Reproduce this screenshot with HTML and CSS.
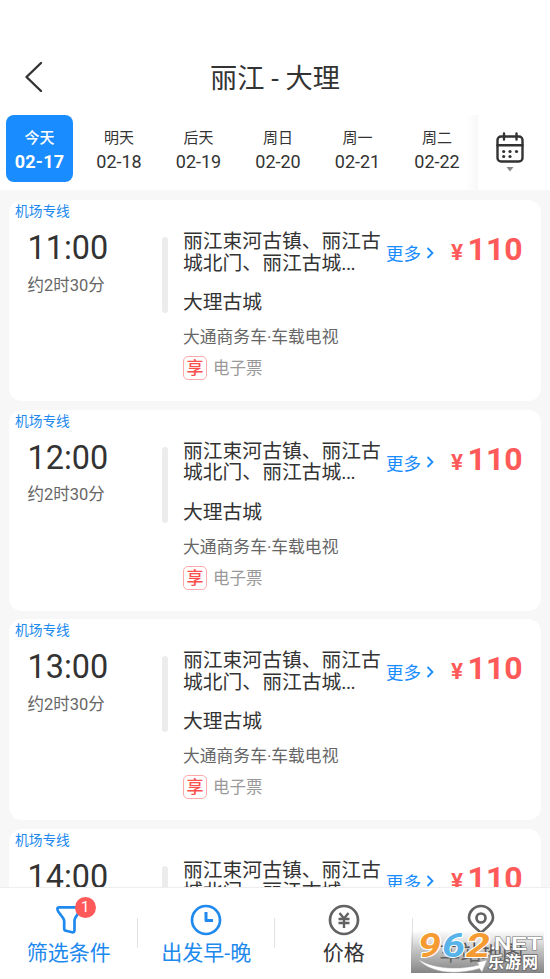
FILE: index.html
```html
<!DOCTYPE html>
<html lang="zh-CN">
<head>
<meta charset="utf-8">
<title>丽江 - 大理</title>
<link rel="stylesheet" href="styles.css">
</head>
<body>
<div class="app">
  <header class="header">
    <svg class="back" width="20" height="32" viewBox="0 0 20 32"><path d="M17 2 2.5 16 17 30"/></svg>
    <h1>丽江 - 大理</h1>
  </header>
  <nav class="dates">
    <div class="days">
      <div class="day active"><span>今天</span><b>02-17</b></div>
      <div class="day"><span>明天</span><b>02-18</b></div>
      <div class="day"><span>后天</span><b>02-19</b></div>
      <div class="day"><span>周日</span><b>02-20</b></div>
      <div class="day"><span>周一</span><b>02-21</b></div>
      <div class="day"><span>周二</span><b>02-22</b></div>
    </div>
    <div class="calendar">
      <svg width="30" height="41" viewBox="0 0 30 41">
        <rect class="line" x="2.5" y="4.5" width="25" height="25" rx="3.5"/>
        <path class="line" d="M2.5 13.3h25M9 1.500v6M21.500 1.500v6"/>
        <g class="dots"><circle cx="8.700" cy="19.500" r="1.600"/><circle cx="15" cy="19.500" r="1.600"/><circle cx="21.500" cy="19.500" r="1.600"/><circle cx="8.700" cy="24.500" r="1.600"/><circle cx="15" cy="24.500" r="1.600"/></g>
        <path class="arrow" d="M11.500 35h7L15 39.500z"/>
      </svg>
    </div>
  </nav>
  <main class="list">
    <article class="card">
      <div class="tag">机场专线</div>
      <div class="trip">
        <div class="when"><div class="time">11:00</div><div class="duration">约2时30分</div></div>
        <div class="bar"></div>
        <div class="route"><div class="from">丽江束河古镇、丽江古<br>城北门、丽江古城<span class="dots-end">...</span></div><div class="to">大理古城</div><div class="vehicle">大通商务车·车载电视</div><div class="ticket"><i>享</i><span>电子票</span></div></div>
        <div class="more">更多<svg width="8" height="14" viewBox="0 0 8 14"><path d="M1.500 2 6.500 7l-5 5"/></svg></div>
        <div class="price"><small>¥</small>110</div>
      </div>
    </article>
    <article class="card">
      <div class="tag">机场专线</div>
      <div class="trip">
        <div class="when"><div class="time">12:00</div><div class="duration">约2时30分</div></div>
        <div class="bar"></div>
        <div class="route"><div class="from">丽江束河古镇、丽江古<br>城北门、丽江古城<span class="dots-end">...</span></div><div class="to">大理古城</div><div class="vehicle">大通商务车·车载电视</div><div class="ticket"><i>享</i><span>电子票</span></div></div>
        <div class="more">更多<svg width="8" height="14" viewBox="0 0 8 14"><path d="M1.500 2 6.500 7l-5 5"/></svg></div>
        <div class="price"><small>¥</small>110</div>
      </div>
    </article>
    <article class="card">
      <div class="tag">机场专线</div>
      <div class="trip">
        <div class="when"><div class="time">13:00</div><div class="duration">约2时30分</div></div>
        <div class="bar"></div>
        <div class="route"><div class="from">丽江束河古镇、丽江古<br>城北门、丽江古城<span class="dots-end">...</span></div><div class="to">大理古城</div><div class="vehicle">大通商务车·车载电视</div><div class="ticket"><i>享</i><span>电子票</span></div></div>
        <div class="more">更多<svg width="8" height="14" viewBox="0 0 8 14"><path d="M1.500 2 6.500 7l-5 5"/></svg></div>
        <div class="price"><small>¥</small>110</div>
      </div>
    </article>
    <article class="card">
      <div class="tag">机场专线</div>
      <div class="trip">
        <div class="when"><div class="time">14:00</div><div class="duration">约2时30分</div></div>
        <div class="bar"></div>
        <div class="route"><div class="from">丽江束河古镇、丽江古<br>城北门、丽江古城<span class="dots-end">...</span></div><div class="to">大理古城</div><div class="vehicle">大通商务车·车载电视</div><div class="ticket"><i>享</i><span>电子票</span></div></div>
        <div class="more">更多<svg width="8" height="14" viewBox="0 0 8 14"><path d="M1.500 2 6.500 7l-5 5"/></svg></div>
        <div class="price"><small>¥</small>110</div>
      </div>
    </article>
  </main>
  <footer class="filters">
    <div class="filter on">
      <div class="icon">
        <svg width="32" height="32" viewBox="0 0 32 32"><path d="M6 3.300H26.500Q28.300 3.300 27.300 6L22.500 13.500Q21.500 15 21.500 17V26Q21.500 28.700 19 28.200L13 26.800Q11.200 26.400 11.200 24.500V17.500Q11.200 15.800 10.200 14.200L5.200 7.500Q3.200 3.300 6 3.300Z"/></svg>
        <span class="badge">1</span>
      </div>
      <span>筛选条件</span>
    </div>
    <div class="filter on">
      <div class="icon"><svg width="32" height="32" viewBox="0 0 32 32"><circle cx="16" cy="16" r="14"/><path class="hand" d="M16 8v8.500h7"/></svg></div>
      <span>出发早-晚</span>
    </div>
    <div class="filter">
      <div class="icon"><svg width="32" height="32" viewBox="0 0 32 32"><circle cx="16" cy="16" r="14"/><path class="yen" d="m11.500 9 4.500 5.500L20.500 9M10.500 15h11M10.500 19h11M16 14.500V24"/></svg></div>
      <span>价格</span>
    </div>
    <div class="filter">
      <div class="icon"><svg width="32" height="32" viewBox="0 0 32 32"><path d="M16 29C13 25 4 20.500 4 14a12 12 0 0 1 24 0C28 20.500 19 25 16 29Z"/><circle cx="16" cy="14" r="4.500"/></svg></div>
      <span>车站地图</span>
    </div>
    <div class="mark">
      <svg width="133" height="43" viewBox="0 0 133 43">
        <defs><linearGradient id="shade" x2="0" y2="1"><stop offset="0" stop-color="#888" stop-opacity="0"/><stop offset=".5" stop-color="#808080" stop-opacity=".5"/><stop offset="1" stop-color="#777" stop-opacity=".9"/></linearGradient></defs>
        <rect width="133" height="43" fill="url(#shade)"/>
        <path class="swoosh" d="M7 29C20 38 45 41 68 35L66 32.500 76 30 71 42 68.500 38.500C42 46 18 42 7 29Z"/>
        <g class="digits"><text x="7" y="26.500" textLength="23" lengthAdjust="spacingAndGlyphs" fill="#f59b32">9</text><text x="31" y="26.500" textLength="23" lengthAdjust="spacingAndGlyphs" fill="#58b3e8">6</text><text x="55" y="26.500" textLength="24" lengthAdjust="spacingAndGlyphs" fill="#f59b32">2</text></g>
        <circle cx="82" cy="18" r="1.500" fill="#fff"/>
        <text class="net" x="83" y="20" textLength="48" lengthAdjust="spacingAndGlyphs">NET</text>
        <text class="site" x="77" y="38" textLength="50">乐游网</text>
      </svg>
    </div>
  </footer>
</div>
</body>
</html>
```

FILE: styles.css
```css
* { box-sizing: border-box; }
body { margin: 0; background: #fff; color: #333; font-family: Roboto, "Noto Sans CJK SC", sans-serif; }
svg { display: block; fill: none; }
.app { width: 550px; height: 979px; display: flex; flex-direction: column; overflow: hidden; }
.header { height: 115px; padding: 61px 24px 0; display: grid; grid-template-columns: 20px 1fr 20px; flex: none; }
.header h1 { margin: 1px 0 0; text-align: center; font-size: 27.2px; line-height: 34px; font-weight: 400; }
.back { stroke: #333; stroke-width: 2.4; stroke-linecap: round; stroke-linejoin: round; }
.dates { height: 75px; display: flex; flex: none; }
.days { width: 478px; display: flex; gap: 12.5px; padding-left: 6px; background: linear-gradient(90deg, #fff 466px, #f8f8f8); }
.day { width: 67px; height: 67px; flex: none; display: flex; flex-direction: column; align-items: center; padding-top: 12px; border-radius: 8px; }
.day span { font-size: 15px; line-height: 22px; }
.day b { font-size: 18px; line-height: 25px; font-weight: 400; }
.day.active { color: #fff; background: #198cff; }
.day.active span { font-weight: 500; }
.day.active b { font-weight: 700; letter-spacing: .2px; }
.calendar { flex: 1; padding: 17px 0 0 17px; background: #fff; }
.calendar .line { stroke: #333; stroke-width: 2.4; stroke-linecap: round; }
.dots { fill: #333; }
.arrow { fill: #888; }
.list { flex: 1; min-height: 0; overflow: hidden; background: #f7f7f7; padding: 10px 9px 0; display: flex; flex-direction: column; gap: 8.5px; }
.card { flex: none; height: 201px; border-radius: 13px; background: #fff; }
.tag { height: 26px; padding: 1px 0 0 6px; color: #2089ee; font-size: 13.7px; line-height: 20px; }
.trip { display: flex; align-items: flex-start; }
.when { width: 153px; padding-left: 18.5px; }
.time { font-size: 32.4px; line-height: 40px; margin-top: 2px; }
.duration { color: #666; font-size: 16.5px; line-height: 22px; margin-top: 6.500px; }
.bar { width: 6px; height: 76px; margin: 11px 15px 0 0; border-radius: 3px; background: #ececec; }
.route { width: 203px; white-space: nowrap; }
.from { font-size: 19.8px; line-height: 21.500px; margin-top: 5px; }
.dots-end { letter-spacing: -.6px; }
.to { font-size: 19.8px; line-height: 28px; margin-top: 15px; }
.vehicle { color: #666; font-size: 16.8px; line-height: 24px; margin-top: 8px; }
.ticket { display: flex; align-items: center; gap: 6px; margin-top: 6px; color: #999; font-size: 16.5px; line-height: 24px; }
.ticket span { padding-top: 2px; }
.ticket i { width: 24px; height: 24px; border: 1.5px solid #ffaaaa; border-radius: 5px; color: #f9504e; text-align: center; font-size: 17px; font-weight: 500; line-height: 23px; font-style: normal; }
.more { display: flex; align-items: center; gap: 5px; height: 24px; margin-top: 14.500px; color: #198cff; font-size: 17.5px; width: 65px; }
.more svg { stroke: #198cff; stroke-width: 1.8; }
.price { color: #ff5a5a; font-size: 32px; line-height: 38px; font-weight: 700; white-space: nowrap; margin-top: 4px; }
.price small { font-size: 22.500px; margin-right: 4.500px; }
.filters { height: 92px; flex: none; position: relative; display: flex; border-top: 1px solid #eee; }
.filter { width: 137.5px; display: flex; flex-direction: column; align-items: center; padding-top: 16px; font-size: 21px; line-height: 35px; }
.filter:nth-child(-n+3) { background: linear-gradient(#e2e2e2, #e2e2e2) right 30px / 1px 30px no-repeat; }
.filter.on { color: #2089ee; }
.icon { position: relative; height: 32px; }
.icon svg { stroke: #626262; stroke-width: 2.7; stroke-linejoin: round; }
.on .icon svg { stroke: #2089ee; }
.icon .yen { stroke-width: 2.4; }
.icon .hand { stroke-width: 3; }
.badge { position: absolute; left: 22px; top: -7px; width: 21px; height: 21px; border-radius: 50%; background: #ff5959; color: #fff; font-size: 15px; line-height: 21px; text-align: center; }
.mark { position: absolute; left: 411px; top: 42px; }
.swoosh { fill: #fff; stroke: #aaa; stroke-width: .5; }
.digits { font-family: Roboto, sans-serif; font-size: 33px; font-weight: 700; font-style: italic; stroke: #fff; stroke-width: 2px; paint-order: stroke; }
.net { fill: #fff; stroke: #777; stroke-width: 1px; paint-order: stroke; font: 700 18px "Liberation Sans", sans-serif; }
.site { fill: #fff; stroke: #666; stroke-width: 1.5px; paint-order: stroke; font: 700 16px "Noto Sans CJK SC", sans-serif; }
```
